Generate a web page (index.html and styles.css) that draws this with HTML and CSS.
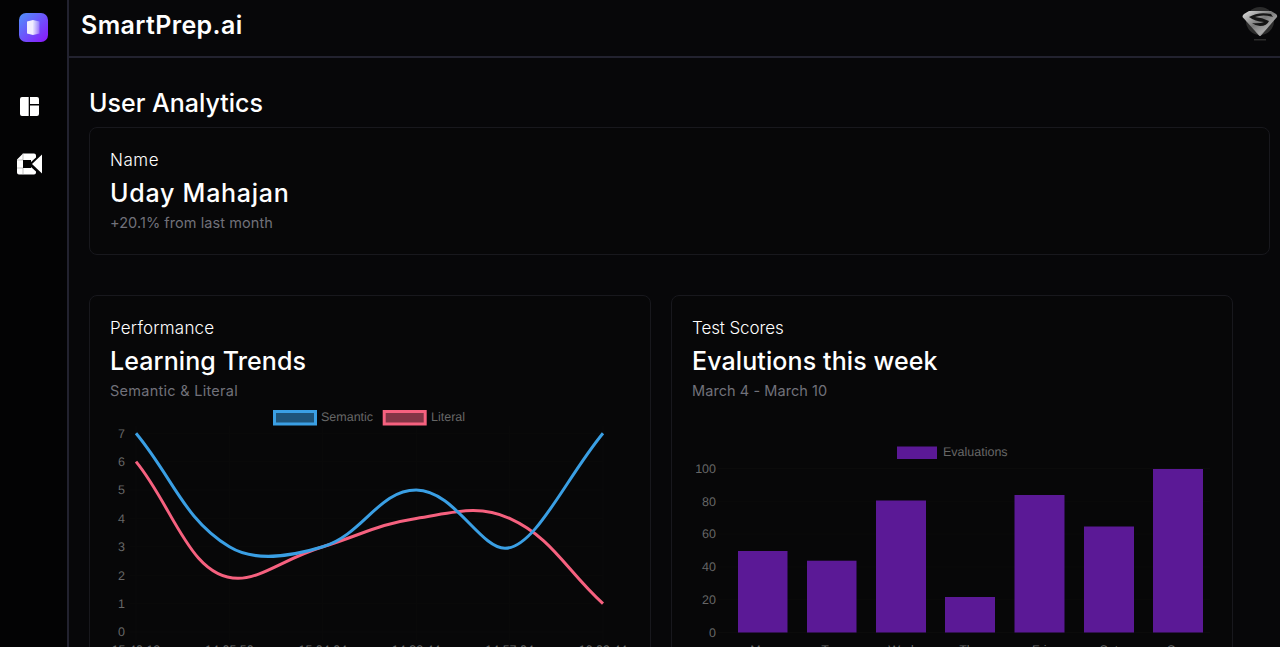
FILE: index.html
```html
<!DOCTYPE html>
<html lang="en">
<head>
<meta charset="utf-8">
<title>SmartPrep.ai</title>
<link rel="stylesheet" href="styles.css">
</head>
<body>
<div class="shell">
  <aside class="sidebar">
    <svg class="logo" viewBox="0 0 29 29" width="29" height="29">
      <defs>
        <linearGradient id="lg" x1="0" y1="0" x2="1" y2="1"><stop offset="0" stop-color="#4f93fb"/><stop offset="1" stop-color="#8c14fb"/></linearGradient>
        <linearGradient id="lp" x1="0" y1="0" x2="1" y2="0"><stop offset="0" stop-color="#fff" stop-opacity=".85"/><stop offset="1" stop-color="#fff" stop-opacity=".25"/></linearGradient>
      </defs>
      <rect width="29" height="29" rx="7" fill="url(#lg)"/>
      <path d="M8 8.500 14 7V22L8 20.500Z" fill="#f1edff"/>
      <path d="M14 7 20.500 8.500V20.500L14 22Z" fill="url(#lp)"/>
    </svg>
    <nav class="side-nav">
      <svg class="nav-dash" viewBox="0 0 19 19" width="19" height="19"><path fill="#fff" d="M2 0H8.700V19H2Q0 19 0 17V2Q0 0 2 0ZM10 0H17Q19 0 19 2V7H10ZM10 8.500H19V17Q19 19 17 19H10Z"/></svg>
      <svg class="nav-video" viewBox="0 0 26 22" width="26" height="22">
        <path fill="#fff" d="M6 .5H17Q19 .5 19 2.500V4.500L14 9V7H6V15H14V14L19 18.500V19.500Q19 21.500 17 21.500H2Q0 21.500 0 19.500V6.500Z"/>
        <path fill="#fff" d="M25 1.500V20.500L15 11Z"/>
        <path fill="none" stroke="#9a9a9a" stroke-width=".6" d="M0 15H6M6 15V21.500M6 .5V7H0"/>
      </svg>
    </nav>
  </aside>
  <div class="content">
    <header class="topbar">
      <h1 class="brand">SmartPrep.ai</h1>
      <svg class="avatar" viewBox="0 0 40 40" width="40" height="40">
        <defs>
          <linearGradient id="steel" x1="0" y1="0" x2="1" y2="1"><stop offset="0" stop-color="#e0e0e0"/><stop offset=".45" stop-color="#7a7a7a"/><stop offset=".7" stop-color="#a8a8a8"/><stop offset="1" stop-color="#4a4a4a"/></linearGradient>
        </defs>
        <circle cx="20" cy="19" r="14" fill="#2c2c2c"/>
        <path d="M2.500 15Q2.500 13 4 12L9 9H31L36 12Q37.500 13 37 15L21 33.500Q20 34.500 19 33.500Z" fill="url(#steel)"/>
        <path d="M9 15Q18 9.500 31 12L33 15Q23 12 15 15Q22 15.500 29 19Q27 24 20 24Q15 23.500 12 21Q19 22 24 20Q15 19.500 9 15Z" fill="#151515"/>
        <rect x="14" y="37" width="12" height="1.500" fill="#2c2c2c"/>
      </svg>
    </header>
    <main class="main">
      <h2 class="page-title">User Analytics</h2>
      <section class="card user-card">
        <p class="eyebrow">Name</p>
        <p class="card-title">Uday Mahajan</p>
        <p class="muted">+20.1% from last month</p>
      </section>
      <div class="charts">
        <section class="card chart-card">
          <p class="eyebrow">Performance</p>
          <p class="card-title">Learning Trends</p>
          <p class="muted muted-wide">Semantic &amp; Literal</p>
          <svg class="chart" viewBox="110 405 520 265" width="520" height="265">
            <g class="grid">
              <path d="M136 426V640M229.400 426V640M322.800 426V640M416.200 426V640M509.600 426V640M603 426V640"/>
              <path d="M130 433.200H603M130 461.600H603M130 490H603M130 518.400H603M130 546.800H603M130 575.200H603M130 603.600H603M130 632H603"/>
            </g>
            <rect class="box-blue" x="274.500" y="411.500" width="41" height="12.500"/>
            <text class="legend" x="321" y="421">Semantic</text>
            <rect class="box-pink" x="384.200" y="411.500" width="41" height="12.500"/>
            <text class="legend" x="431" y="421">Literal</text>
            <g class="tick tick-end">
              <text x="125" y="437.500">7</text><text x="125" y="466">6</text><text x="125" y="494.300">5</text><text x="125" y="522.700">4</text><text x="125" y="551">3</text><text x="125" y="579.500">2</text><text x="125" y="608">1</text><text x="125" y="636.300">0</text>
            </g>
            <g class="tick tick-mid">
              <text x="136" y="654">15:40:12</text><text x="229.400" y="654">14:05:50</text><text x="322.800" y="654">15:04:04</text><text x="416.200" y="654">14:32:44</text><text x="509.600" y="654">14:57:04</text><text x="603" y="654">16:09:44</text>
            </g>
            <path class="line-pink" d="M136 461.600C173.400 507 190 578.300 238 578.300C262 578.300 285.400 558.200 322.800 546.800C360.200 535.400 378 524.200 416.200 518.400C452.700 512.850 477.850 503.900 509.600 518.400C552.600 538 565.600 569.500 603 603.600"/>
            <path class="line-blue" d="M136 433.200C173.400 478.600 183.700 519 229.400 546.800C255 562.400 290 556.800 322.800 546.800C363.100 534.550 378.800 490 416.200 490C453.600 490 480 548.300 505 548.300C535 548.300 565.600 478.600 603 433.200"/>
          </svg>
        </section>
        <section class="card chart-card">
          <p class="eyebrow eyebrow-tight">Test Scores</p>
          <p class="card-title">Evalutions this week</p>
          <p class="muted">March 4 - March 10</p>
          <svg class="chart" viewBox="692 405 520 265" width="520" height="265">
            <g class="grid">
              <path d="M718 468.500H1210M718 501.300H1210M718 534.100H1210M718 566.900H1210M718 599.700H1210M718 632.500H1210"/>
            </g>
            <rect class="bar" x="897" y="446.500" width="40" height="12.500"/>
            <text class="legend" x="943" y="456">Evaluations</text>
            <g class="tick tick-end">
              <text x="716" y="472.700">100</text><text x="716" y="505.500">80</text><text x="716" y="538.300">60</text><text x="716" y="571">40</text><text x="716" y="603.800">20</text><text x="716" y="636.600">0</text>
            </g>
            <g class="tick tick-mid">
              <text x="762.500" y="654">Mon</text><text x="831.800" y="654">Tue</text><text x="901" y="654">Wed</text><text x="970" y="654">Thu</text><text x="1039.300" y="654">Fri</text><text x="1108.800" y="654">Sat</text><text x="1178" y="654">Sun</text>
            </g>
            <rect class="bar" x="738" y="551" width="49.500" height="81.500"/>
            <rect class="bar" x="807" y="560.700" width="49.500" height="71.800"/>
            <rect class="bar" x="876" y="500.500" width="50" height="132"/>
            <rect class="bar" x="945" y="597" width="50" height="35.500"/>
            <rect class="bar" x="1014.500" y="495" width="50" height="137.500"/>
            <rect class="bar" x="1084" y="526.500" width="50" height="106"/>
            <rect class="bar" x="1153" y="469" width="50" height="163.500"/>
          </svg>
        </section>
      </div>
    </main>
  </div>
</div>
</body>
</html>
```

FILE: styles.css
```css
* { box-sizing: border-box; }
html, body { height: 100%; margin: 0; overflow: hidden; }
body { background: #070709; color: #fff; font-family: Inter, "Noto Sans", sans-serif; }
h1, h2, p { margin: 0; }

.shell { display: flex; height: 100vh; overflow: hidden; }

.sidebar {
  flex: 0 0 69px;
  display: flex;
  flex-direction: column;
  align-items: center;
  padding-top: 13px;
  background: #030304;
  border-right: 2px solid #22222f;
}
.logo { display: block; margin-left: -1px; }
.side-nav { display: flex; flex-direction: column; align-items: center; margin-top: 55px; gap: 37px; }
.nav-dash { display: block; margin-left: -8px; }
.nav-video { display: block; margin-left: -7px; }

.content { flex: 1; min-width: 0; }

.topbar {
  height: 58px;
  display: flex;
  align-items: flex-start;
  justify-content: space-between;
  padding: 2px 0 0 12px;
  border-bottom: 2px solid #22222f;
}
.brand { font-size: 25px; font-weight: 600; line-height: 46px; letter-spacing: .37px; }
.avatar { display: block; }

.main { padding: 27px 10px 0 20px; }
.page-title { font-size: 25px; font-weight: 500; line-height: 36px; margin-bottom: 6px; }

.card { border: 1px solid #18181d; border-radius: 8px; padding: 20px; background: #070708; }
.user-card { height: 128px; }
.eyebrow { font-size: 17px; font-weight: 300; line-height: 24px; letter-spacing: .2px; }
.eyebrow-tight { letter-spacing: -.1px; }
.user-card .eyebrow { letter-spacing: .55px; }
.card-title { font-size: 25px; font-weight: 500; line-height: 36px; margin-top: 3px; letter-spacing: .1px; }
.user-card .card-title { letter-spacing: .75px; }
.muted { font-size: 14.500px; font-weight: 400; line-height: 20px; margin-top: 2px; color: #71717a; letter-spacing: .07px; }
.muted-wide { letter-spacing: .27px; }

.charts { display: flex; gap: 20px; margin-top: 40px; }
.chart-card { flex: 0 0 562px; height: 520px; }
.chart { display: block; margin-top: 4px; overflow: hidden; }

.grid path { fill: none; stroke: #0b0b0b; stroke-width: 1; }
.legend, .tick text { font-family: "Liberation Sans", Arial, sans-serif; font-size: 12.500px; fill: #666; text-rendering: geometricPrecision; }
.tick-end text { text-anchor: end; }
.tick-mid text { text-anchor: middle; }

.box-blue { fill: rgba(54, 162, 235, .5); stroke: #3a9fe4; stroke-width: 3; }
.box-pink { fill: rgba(255, 99, 132, .5); stroke: #f6617f; stroke-width: 3; }
.line-blue { fill: none; stroke: #3a9fe4; stroke-width: 3; }
.line-pink { fill: none; stroke: #f6617f; stroke-width: 3; }
.bar { fill: #5b1996; }
```
